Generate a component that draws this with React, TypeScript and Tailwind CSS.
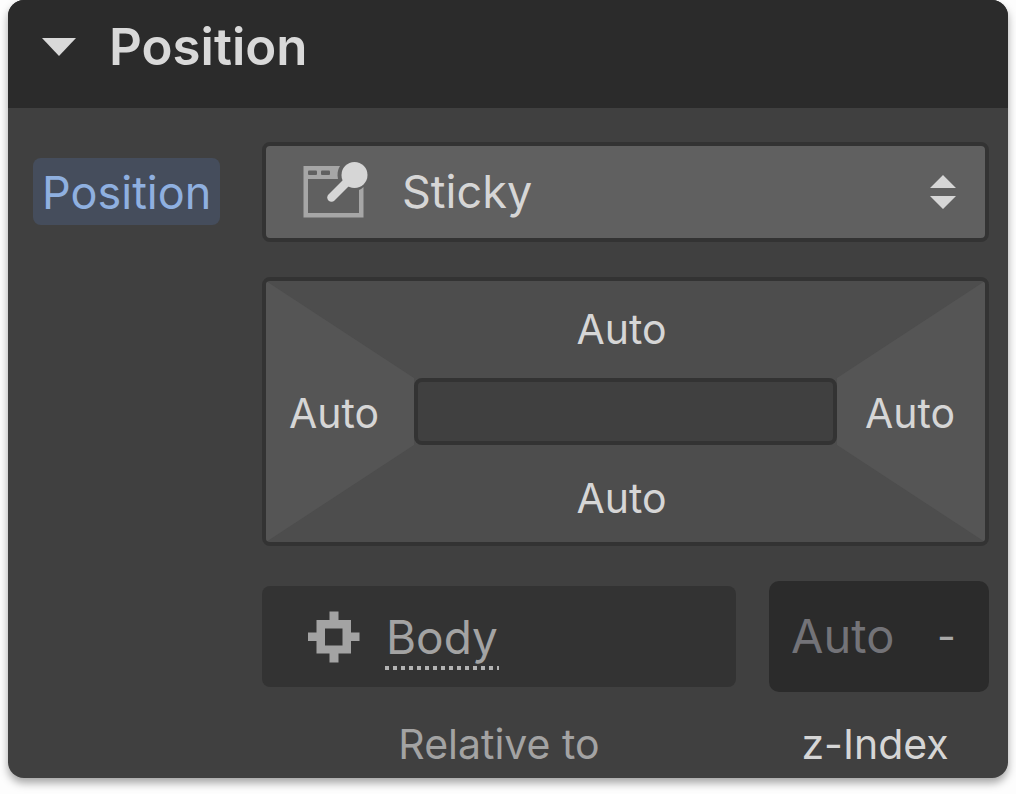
import { useState } from 'react';

function StickyIcon() {
  return (
    <svg width="72" height="60" viewBox="0 0 72 60" aria-hidden="true">
      {/* Window */}
      <path
        d="M3.500 6H40C37.500 10 37 14 38 19H8V53H59V30Q61 29.500 63.500 27V57.500H3.500Z"
        fill="#a6a6a6"
      />
      <rect x="8" y="10.500" width="9" height="4.500" rx="1" fill="#606060" />
      <rect x="21" y="10.500" width="9" height="4.500" rx="1" fill="#606060" />
      {/* Pin */}
      <path d="M54 15L31.500 37.500" stroke="#d6d6d6" strokeWidth="8.500" strokeLinecap="round" />
      <circle cx="54.500" cy="15" r="13" fill="#d6d6d6" />
    </svg>
  );
}

function TargetIcon() {
  return (
    <svg width="52" height="52" viewBox="0 0 52 52" aria-hidden="true">
      <path
        fillRule="evenodd"
        d="M21.500 0.500h9v8.500h12.500v12.500h8.500v8.500h-8.500v12.500h-12.500v9h-9v-9h-13v-12.500h-8.500v-8.500h8.500v-12.500h13zM17 17.500v17h17.500v-17z"
        fill="#a3a3a3"
      />
    </svg>
  );
}

export default function App() {
  const [open, setOpen] = useState(true);

  return (
    <main className="min-h-screen bg-[#fdfdfd] px-2 pb-4 font-['Inter',sans-serif]">
      <section className="rounded-2xl overflow-hidden bg-[#404040] shadow-[0_5px_8px_rgba(0,0,0,0.35)]">

        {/* Header */}
        <button
          type="button"
          aria-expanded={open}
          onClick={() => setOpen(!open)}
          className="flex h-[108px] w-full items-center gap-[33px] bg-[#2b2b2b] pb-[14px] pl-[34px] text-left text-[51px] font-semibold text-[#d9d9d9]"
        >
          <svg width="34" height="18" viewBox="0 0 34 18" aria-hidden="true">
            <path d="M0 0H34L17 18Z" fill="#d9d9d9" />
          </svg>
          Position
        </button>

        {open && (
          <div className="grid grid-cols-[229px_1fr] pt-[34px] pr-[19px] pb-[10px] pl-[25px]">
            <div className="pt-4">
              <label
                htmlFor="position"
                className="inline-flex h-[67px] items-center rounded-lg bg-[#454d5c] px-[9px] pt-[2px] text-[45px] text-[#8fb0e0]"
              >
                Position
              </label>
            </div>

            <div className="flex flex-col gap-[35px]">

              {/* Position type */}
              <div className="relative">
                <select
                  id="position"
                  defaultValue="Sticky"
                  className="h-[100px] w-full appearance-none rounded-lg border-4 border-[#333333] bg-[#606060] pl-[136px] text-[45px] text-[#d6d6d6]"
                >
                  <option>Static</option>
                  <option>Relative</option>
                  <option>Absolute</option>
                  <option>Fixed</option>
                  <option>Sticky</option>
                </select>
                <span className="pointer-events-none absolute top-[18px] left-[38px]">
                  <StickyIcon />
                </span>
                <svg
                  className="pointer-events-none absolute top-[33px] right-[33px]"
                  width="26"
                  height="34"
                  viewBox="0 0 26 34"
                  aria-hidden="true"
                >
                  <path d="M13 0L26 13H0ZM0 21H26L13 34Z" fill="#d6d6d6" />
                </svg>
              </div>

              {/* Offsets */}
              <div className="grid h-[269px] grid-cols-[148px_1fr_148px] grid-rows-[1fr_67px_1fr] overflow-hidden rounded-lg border-4 border-[#333333] bg-[#4d4d4d] text-[41px] text-[#d6d6d6]">
                <button
                  type="button"
                  aria-label="Left: Auto"
                  className="row-span-3 bg-[#555555] pt-1 pr-3 [clip-path:polygon(0_0,100%_97px,100%_164px,0_100%)]"
                >
                  Auto
                </button>
                <button type="button" aria-label="Top: Auto" className="pr-2">
                  Auto
                </button>
                <button
                  type="button"
                  aria-label="Right: Auto"
                  className="row-span-3 bg-[#555555] pt-1 pr-[2px] [clip-path:polygon(100%_0,0_97px,0_164px,100%_100%)]"
                >
                  Auto
                </button>
                <div className="rounded-lg border-4 border-[#333333] bg-[#404040]" />
                <button type="button" aria-label="Bottom: Auto" className="pt-[10px] pr-2">
                  Auto
                </button>
              </div>

              {/* Relative to and z-index */}
              <div className="grid grid-cols-[1fr_220px] items-center gap-x-[33px] gap-y-7">
                <div className="flex h-[101px] items-center gap-[25px] rounded-lg bg-[#333333] pl-[46px]">
                  <TargetIcon />
                  <button
                    type="button"
                    aria-describedby="relative-to"
                    className="pt-1 text-[46px] leading-[58px] text-[#a3a3a3]"
                  >
                    <span className="block px-[1px]">Body</span>
                    <span className="block h-1 w-full bg-[repeating-linear-gradient(90deg,#b3b3b3_0_4px,transparent_4px_8px)]" />
                  </button>
                </div>
                <div className="flex h-[111px] items-center rounded-[10px] bg-[#2b2b2b] pl-[22px] text-[47px]">
                  <input
                    id="z-index"
                    type="text"
                    placeholder="Auto"
                    className="w-[146px] bg-transparent text-[#737378] outline-none placeholder:text-[#737378]"
                  />
                  <button type="button" aria-label="Unit" className="text-[41px] text-[#a8a8a8]">
                    -
                  </button>
                </div>
                <p id="relative-to" className="text-center text-[41px] leading-[48px] text-[#a3a3a3]">
                  Relative to
                </p>
                <label
                  htmlFor="z-index"
                  className="pr-2 text-center text-[41px] leading-[48px] text-[#d6d6d6]"
                >
                  z-Index
                </label>
              </div>

            </div>
          </div>
        )}

      </section>
    </main>
  );
}
